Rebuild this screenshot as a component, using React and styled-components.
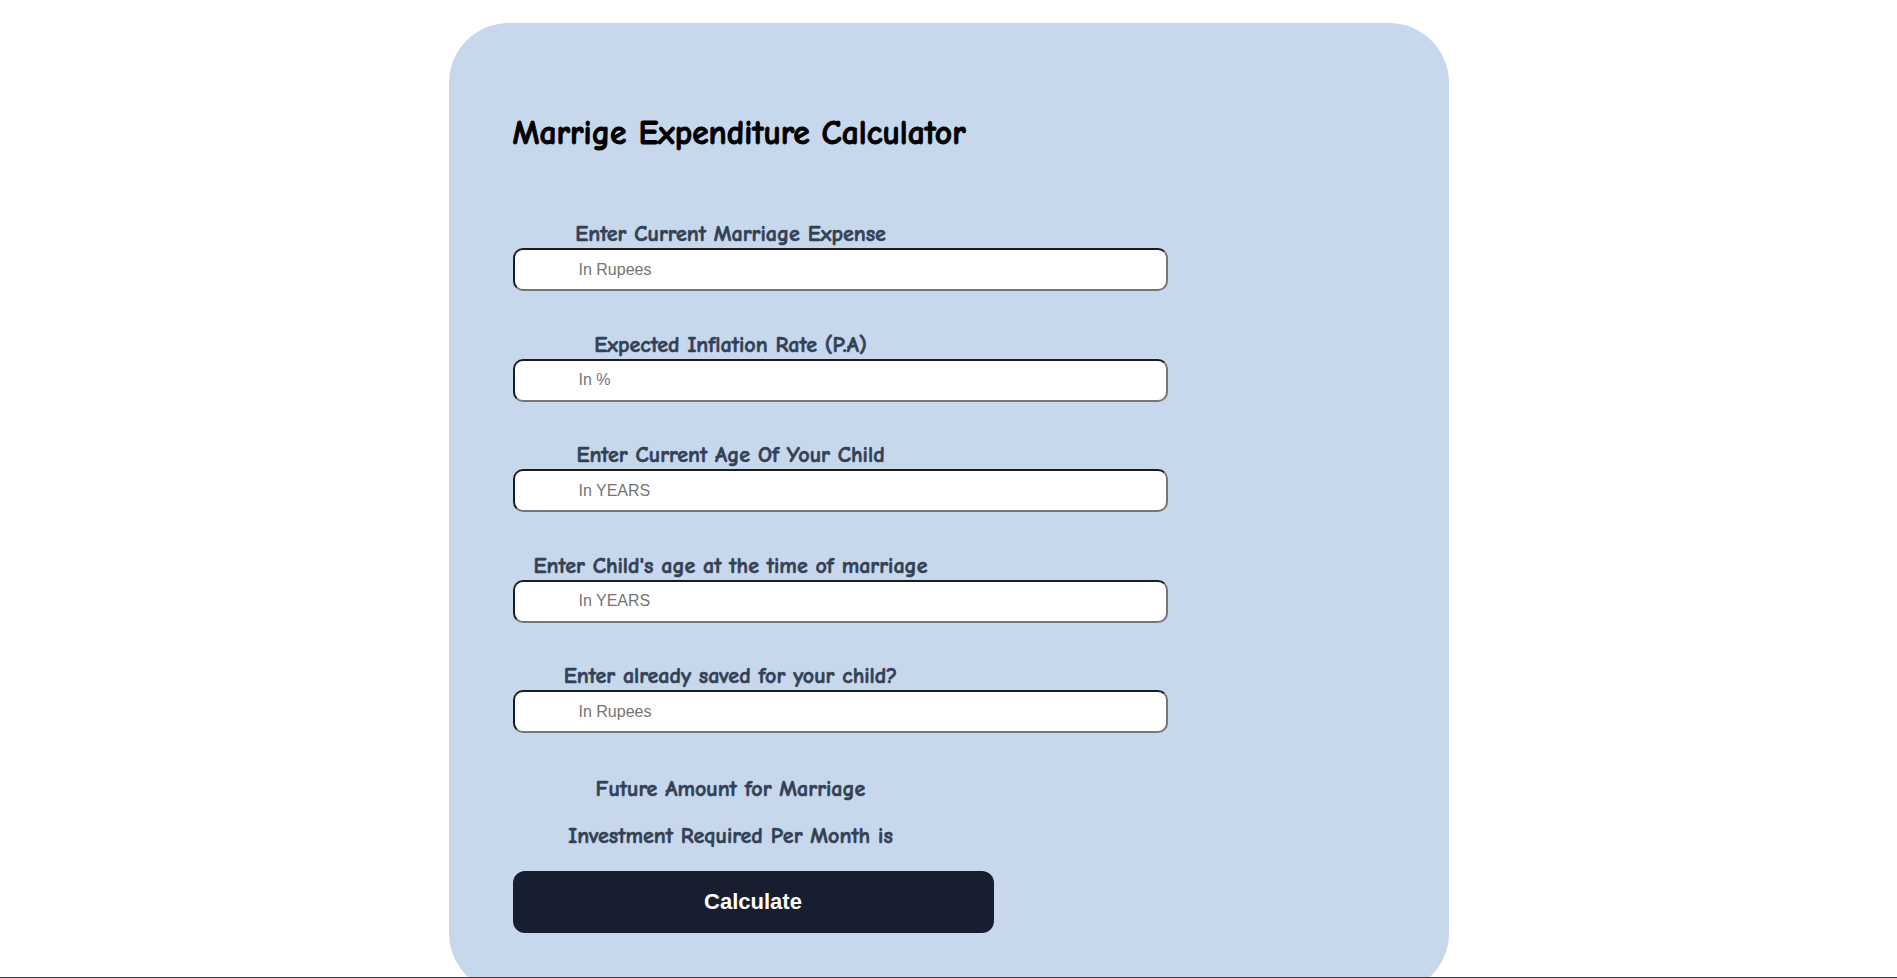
import React, { useState } from "react";
import styled, { createGlobalStyle } from "styled-components";

const GlobalStyle = createGlobalStyle`
body {
    margin: 0;
    background: #ffffff;
    font-family: "Liberation Sans", Arial, sans-serif;
}
`;

const comic = `"Comic Sans MS", "Comic Neue", "Lato", sans-serif`;

const fields = [
    { label: "Enter Current Marriage Expense", placeholder: "In Rupees" },
    { label: "Expected Inflation Rate (P.A)", placeholder: "In %" },
    { label: "Enter Current Age Of Your Child", placeholder: "In YEARS" },
    { label: "Enter Child's age at the time of marriage", placeholder: "In YEARS" },
    { label: "Enter already saved for your child?", placeholder: "In Rupees" },
];

function App() {
    const [values, setValues] = useState(fields.map(() => ""));

    const onChange = (i, v) => {
        const next = [...values];
        next[i] = v;
        setValues(next);
    };

    return (
        <Page>
            <GlobalStyle />
            <Card>
                <Title>Marrige Expenditure Calculator</Title>
                <Form>
                    {fields.map((f, i) => (
                        <Field key={i}>
                            <Label>{f.label}</Label>
                            <Input
                                type="text"
                                placeholder={f.placeholder}
                                value={values[i]}
                                onChange={e => onChange(i, e.target.value)}
                            />
                        </Field>
                    ))}
                </Form>
                <Results>
                    <Label as="p">Future Amount for Marriage</Label>
                    <Label as="p">Investment Required Per Month is</Label>
                </Results>
                <Button>Calculate</Button>
            </Card>
            <BottomLine />
        </Page>
    );
}

const Page = styled.div`
padding-top: 23px;
`;

const Card = styled.div`
width: 1000px;
box-sizing: border-box;
margin: 0 auto;
background: #c7d8ed;
border-radius: 60px;
padding: 90px 62px 60px 64px;
`;

const Title = styled.h1`
margin: 0;
font-family: ${comic};
font-size: 33.5px;
line-height: 40px;
font-weight: 700;
color: #000;
-webkit-text-stroke: 0.9px #000;
`;

const Form = styled.div`
display: flex;
flex-direction: column;
gap: 39.5px;
margin-top: 67px;
`;

const Field = styled.div`
display: flex;
flex-direction: column;
`;

const Label = styled.label`
display: block;
width: 436px;
margin: 0;
text-align: center;
font-family: ${comic};
font-size: 22px;
line-height: 28px;
font-weight: 700;
color: #334155;
-webkit-text-stroke: 0.6px #334155;
`;

const Input = styled.input`
width: 655px;
height: 43px;
box-sizing: border-box;
border-width: 2px;
border-style: solid;
border-color: #1c1c1c #767676 #767676 #1c1c1c;
border-radius: 10px;
background: #fff;
padding: 0 0 0 64px;
font-family: "Liberation Sans", Arial, sans-serif;
font-size: 16px;
color: #222;
outline: none;

&::placeholder {
    color: #757575;
}
`;

const Results = styled.div`
display: flex;
flex-direction: column;
gap: 19px;
margin-top: 42px;
`;

const Button = styled.button`
display: block;
width: 481px;
height: 62px;
margin-top: 21px;
border: none;
border-radius: 12px;
background: #161e2f;
color: #fff;
font-family: "Liberation Sans", Arial, sans-serif;
font-size: 22px;
font-weight: 700;
cursor: pointer;
`;

const BottomLine = styled.div`
position: fixed;
left: 0;
right: 0;
bottom: 0;
height: 1px;
background: #3c3f44;
`;

export default App;
